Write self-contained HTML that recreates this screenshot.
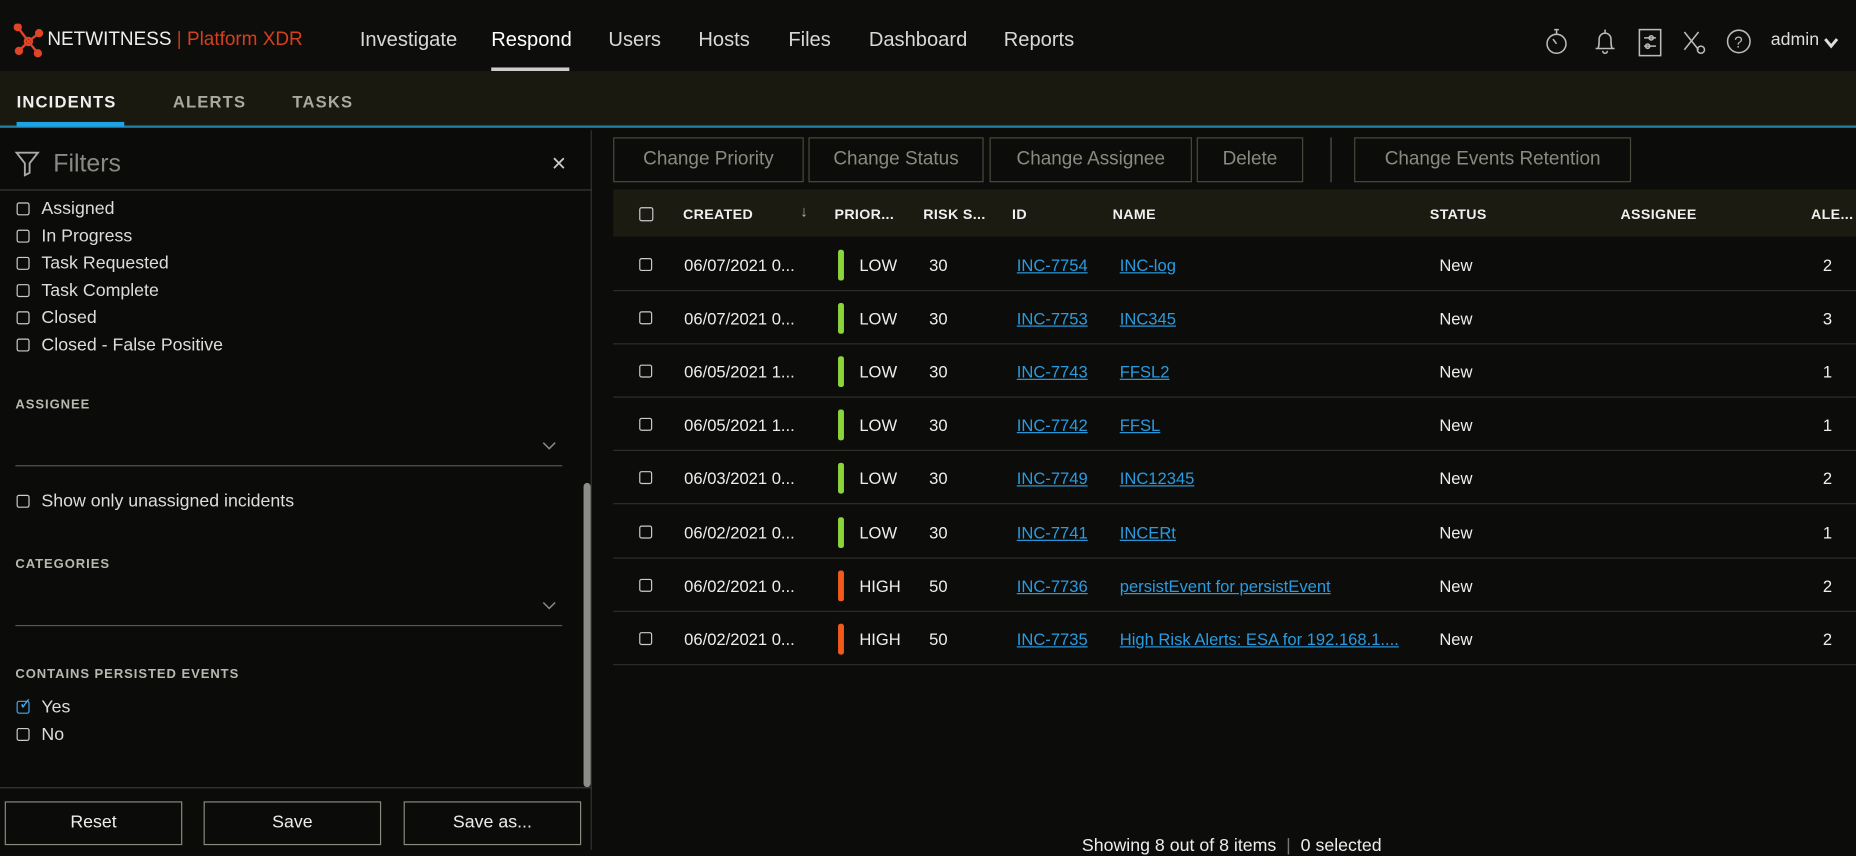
<!DOCTYPE html>
<html><head><meta charset="utf-8"><style>
*{margin:0;padding:0;box-sizing:border-box}
html,body{width:1856px;height:850px;overflow:hidden;background:#0c0c0a}
#w{position:absolute;left:0;top:0;width:1568px;height:718px;transform:scale(1.18367);transform-origin:0 0;font-family:"Liberation Sans",sans-serif;color:#ddd;background:#0c0c0a}
.a{position:absolute;white-space:nowrap}
.top{position:absolute;left:0;top:0;width:1568px;height:60px;background:#0d0d0b}
.nav{font-size:17px;color:#d8d8d8;top:24px}
.sub{position:absolute;left:0;top:60px;width:1568px;height:48px;background:#19190f;border-bottom:2px solid #1d7ea6}
.st{font-size:14px;font-weight:bold;letter-spacing:1px;color:#a9a9a0;top:18px}
.cb{display:inline-block;width:11px;height:11px;border:1.5px solid #ccc;border-radius:2px;vertical-align:-1px;margin-right:10px}
.li{font-size:15px;color:#ddd;left:14px}
.lab{font-size:11px;font-weight:bold;color:#b8b8b0;letter-spacing:.8px;left:13px}
.ln{position:absolute;height:1px;background:#5a5a50}
.btn{position:absolute;border:1.5px solid #4a4a3c;color:#8a8a80;font-size:16px;text-align:center;line-height:35px;top:116px;height:38px}
.bb{position:absolute;border:1.5px solid #8a8a80;color:#eee;font-size:15px;text-align:center;line-height:34px;top:677px;height:37px;width:150px}
.th{font-size:12px;font-weight:bold;color:#f0f0f0;top:174px;letter-spacing:.3px}
.row{position:absolute;left:518px;width:1050px;height:45px;border-bottom:1px solid #2e2e28;font-size:14px;color:#eee}
.row span{position:absolute;top:15px;white-space:nowrap}
.lk{color:#2a9be0;text-decoration:underline}
.bar{width:5px;height:26px;border-radius:2px;top:10px!important}
</style></head><body><div id="w">
<div class="top">
<svg class="a" style="left:11px;top:20px" width="26" height="30" viewBox="0 0 26 30"><g stroke="#e0452a" stroke-width="2" fill="#e0452a"><line x1="4" y1="3" x2="13" y2="15"/><line x1="22" y1="8" x2="13" y2="15"/><line x1="13" y1="15" x2="5" y2="23"/><line x1="13" y1="15" x2="21" y2="25"/><circle cx="4" cy="3" r="2.5"/><circle cx="22" cy="8" r="2.5"/><circle cx="5" cy="23" r="2.5"/><circle cx="21" cy="25" r="2.5"/><circle cx="13" cy="15" r="3" fill="none"/></g></svg>
<div class="a" style="left:40px;top:25px;font-size:16px;color:#eee">NETWITNESS<span style="color:#c33a1c"> | </span><span style="color:#d4401e">Platform XDR</span></div>
<div class="a nav" style="left:304px">Investigate</div>
<div class="a nav" style="left:415px;color:#fff">Respond</div>
<div class="a" style="left:415px;top:57px;width:66px;height:3px;background:#ccc"></div>
<div class="a nav" style="left:514px">Users</div>
<div class="a nav" style="left:590px">Hosts</div>
<div class="a nav" style="left:666px">Files</div>
<div class="a nav" style="left:734px">Dashboard</div>
<div class="a nav" style="left:848px">Reports</div>
<svg class="a" style="left:1304px;top:22px" width="240" height="26" viewBox="0 0 240 26" fill="none" stroke="#bbb" stroke-width="1.3"><circle cx="11" cy="15" r="8"/><path d="M9 3h4M11 3v4M11 15l-3-4"/><path d="M44 19h16M46 19c1-2 1-4 1-8a5 5 0 0 1 10 0c0 4 0 6 1 8M50 21a2 2 0 0 0 4 0M52 3v3"/><rect x="81" y="3" width="18" height="22"/><path d="M85 10h10M85 17h10"/><circle cx="91" cy="10" r="1.8"/><circle cx="88" cy="17" r="1.8"/><path d="M119 5l12 15M131 5l-12 15"/><circle cx="133" cy="20" r="3"/><circle cx="165" cy="13" r="9.5"/><text x="161" y="18" fill="#bbb" stroke="none" font-size="13" font-family="Liberation Sans">?</text></svg>
<div class="a" style="left:1496px;top:25px;font-size:15px;color:#ddd">admin</div>
<svg class="a" style="left:1541px;top:32px" width="12" height="9" viewBox="0 0 12 9"><path d="M1 1l5 6 5-6" fill="none" stroke="#ddd" stroke-width="2.5"/></svg>
</div>
<div class="sub">
<div class="a st" style="left:14px;color:#f0f0f0">INCIDENTS</div>
<div class="a st" style="left:146px">ALERTS</div>
<div class="a st" style="left:247px">TASKS</div>
<div class="a" style="left:14px;top:43px;width:91px;height:4px;background:#1ea3e6"></div>
</div>
<div class="a" style="left:0;top:110px;width:500px;height:608px;background:#0b0b09;border-right:1px solid #333"></div>
<svg class="a" style="left:12px;top:126px" width="22" height="24" viewBox="0 0 22 24" fill="none" stroke="#aaa" stroke-width="1.6"><path d="M2 3h18l-7 9v8l-4 2V12z"/></svg>
<div class="a" style="left:45px;top:127px;font-size:21px;color:#8a8a84">Filters</div>
<div class="a" style="left:466px;top:127px;font-size:21px;color:#ccc">×</div>
<div class="ln" style="left:0;top:160px;width:500px;background:#3a3a32"></div>
<div class="a li" style="top:168px"><span class="cb"></span>Assigned</div>
<div class="a li" style="top:191px"><span class="cb"></span>In Progress</div>
<div class="a li" style="top:214px"><span class="cb"></span>Task Requested</div>
<div class="a li" style="top:237px"><span class="cb"></span>Task Complete</div>
<div class="a li" style="top:260px"><span class="cb"></span>Closed</div>
<div class="a li" style="top:283px"><span class="cb"></span>Closed - False Positive</div>
<div class="a lab" style="top:336px">ASSIGNEE</div>
<div class="ln" style="left:13px;top:393px;width:462px"></div>
<svg class="a" style="left:458px;top:373px" width="12" height="8" viewBox="0 0 12 8"><path d="M1 1l5 5 5-5" fill="none" stroke="#888" stroke-width="1.3"/></svg>
<div class="a li" style="top:415px"><span class="cb"></span>Show only unassigned incidents</div>
<div class="a lab" style="top:471px">CATEGORIES</div>
<div class="ln" style="left:13px;top:528px;width:462px"></div>
<svg class="a" style="left:458px;top:508px" width="12" height="8" viewBox="0 0 12 8"><path d="M1 1l5 5 5-5" fill="none" stroke="#888" stroke-width="1.3"/></svg>
<div class="a lab" style="top:564px">CONTAINS PERSISTED EVENTS</div>
<div class="a li" style="top:589px"><span class="cb" style="border-color:#4aa8e8;position:relative"><span style="position:absolute;left:1px;top:-6px;color:#4aa8e8;font-size:13px">&#10003;</span></span>Yes</div>
<div class="a li" style="top:612px"><span class="cb"></span>No</div>
<div class="a" style="left:493px;top:408px;width:6px;height:257px;background:#8c8c88;border-radius:3px"></div>
<div class="ln" style="left:0;top:665px;width:500px;background:#3a3a32"></div>
<div class="bb" style="left:4px">Reset</div>
<div class="bb" style="left:172px">Save</div>
<div class="bb" style="left:341px">Save as...</div>
<div class="btn" style="left:518px;width:161px">Change Priority</div>
<div class="btn" style="left:683px;width:148px">Change Status</div>
<div class="btn" style="left:836px;width:171px">Change Assignee</div>
<div class="btn" style="left:1011px;width:90px">Delete</div>
<div class="a" style="left:1124px;top:116px;width:1px;height:38px;background:#555"></div>
<div class="btn" style="left:1144px;width:234px">Change Events Retention</div>
<div class="a" style="left:518px;top:160px;width:1050px;height:40px;background:#1b1b11"></div>
<div class="a" style="left:540px;top:175px;width:12px;height:12px;border:1.5px solid #ccc;border-radius:2px"></div>
<div class="a th" style="left:577px">CREATED</div>
<div class="a" style="left:676px;top:171px;font-size:13px;color:#aaa">↓</div>
<div class="a th" style="left:705px">PRIOR...</div>
<div class="a th" style="left:780px">RISK S...</div>
<div class="a th" style="left:855px">ID</div>
<div class="a th" style="left:940px">NAME</div>
<div class="a th" style="left:1208px">STATUS</div>
<div class="a th" style="left:1369px">ASSIGNEE</div>
<div class="a th" style="left:1530px">ALE...</div>
<div class="row" style="top:201px"><span style="left:22px;top:17px" class="cb"></span><span style="left:60px">06/07/2021 0...</span><span class="bar" style="left:190px;background:#8bd43a"></span><span style="left:208px">LOW</span><span style="left:267px">30</span><span class="lk" style="left:341px">INC-7754</span><span class="lk" style="left:428px">INC-log</span><span style="left:698px">New</span><span style="left:1022px">2</span></div>
<div class="row" style="top:246px"><span style="left:22px;top:17px" class="cb"></span><span style="left:60px">06/07/2021 0...</span><span class="bar" style="left:190px;background:#8bd43a"></span><span style="left:208px">LOW</span><span style="left:267px">30</span><span class="lk" style="left:341px">INC-7753</span><span class="lk" style="left:428px">INC345</span><span style="left:698px">New</span><span style="left:1022px">3</span></div>
<div class="row" style="top:291px"><span style="left:22px;top:17px" class="cb"></span><span style="left:60px">06/05/2021 1...</span><span class="bar" style="left:190px;background:#8bd43a"></span><span style="left:208px">LOW</span><span style="left:267px">30</span><span class="lk" style="left:341px">INC-7743</span><span class="lk" style="left:428px">FFSL2</span><span style="left:698px">New</span><span style="left:1022px">1</span></div>
<div class="row" style="top:336px"><span style="left:22px;top:17px" class="cb"></span><span style="left:60px">06/05/2021 1...</span><span class="bar" style="left:190px;background:#8bd43a"></span><span style="left:208px">LOW</span><span style="left:267px">30</span><span class="lk" style="left:341px">INC-7742</span><span class="lk" style="left:428px">FFSL</span><span style="left:698px">New</span><span style="left:1022px">1</span></div>
<div class="row" style="top:381px"><span style="left:22px;top:17px" class="cb"></span><span style="left:60px">06/03/2021 0...</span><span class="bar" style="left:190px;background:#8bd43a"></span><span style="left:208px">LOW</span><span style="left:267px">30</span><span class="lk" style="left:341px">INC-7749</span><span class="lk" style="left:428px">INC12345</span><span style="left:698px">New</span><span style="left:1022px">2</span></div>
<div class="row" style="top:427px"><span style="left:22px;top:17px" class="cb"></span><span style="left:60px">06/02/2021 0...</span><span class="bar" style="left:190px;background:#8bd43a"></span><span style="left:208px">LOW</span><span style="left:267px">30</span><span class="lk" style="left:341px">INC-7741</span><span class="lk" style="left:428px">INCERt</span><span style="left:698px">New</span><span style="left:1022px">1</span></div>
<div class="row" style="top:472px"><span style="left:22px;top:17px" class="cb"></span><span style="left:60px">06/02/2021 0...</span><span class="bar" style="left:190px;background:#f05a1a"></span><span style="left:208px">HIGH</span><span style="left:267px">50</span><span class="lk" style="left:341px">INC-7736</span><span class="lk" style="left:428px">persistEvent for persistEvent</span><span style="left:698px">New</span><span style="left:1022px">2</span></div>
<div class="row" style="top:517px"><span style="left:22px;top:17px" class="cb"></span><span style="left:60px">06/02/2021 0...</span><span class="bar" style="left:190px;background:#f05a1a"></span><span style="left:208px">HIGH</span><span style="left:267px">50</span><span class="lk" style="left:341px">INC-7735</span><span class="lk" style="left:428px">High Risk Alerts: ESA for 192.168.1....</span><span style="left:698px">New</span><span style="left:1022px">2</span></div>
<div class="a" style="left:914px;top:706px;font-size:15px;color:#eee">Showing 8 out of 8 items <span style="color:#777">&nbsp;|&nbsp;</span> 0 selected</div>
</div></body></html>
